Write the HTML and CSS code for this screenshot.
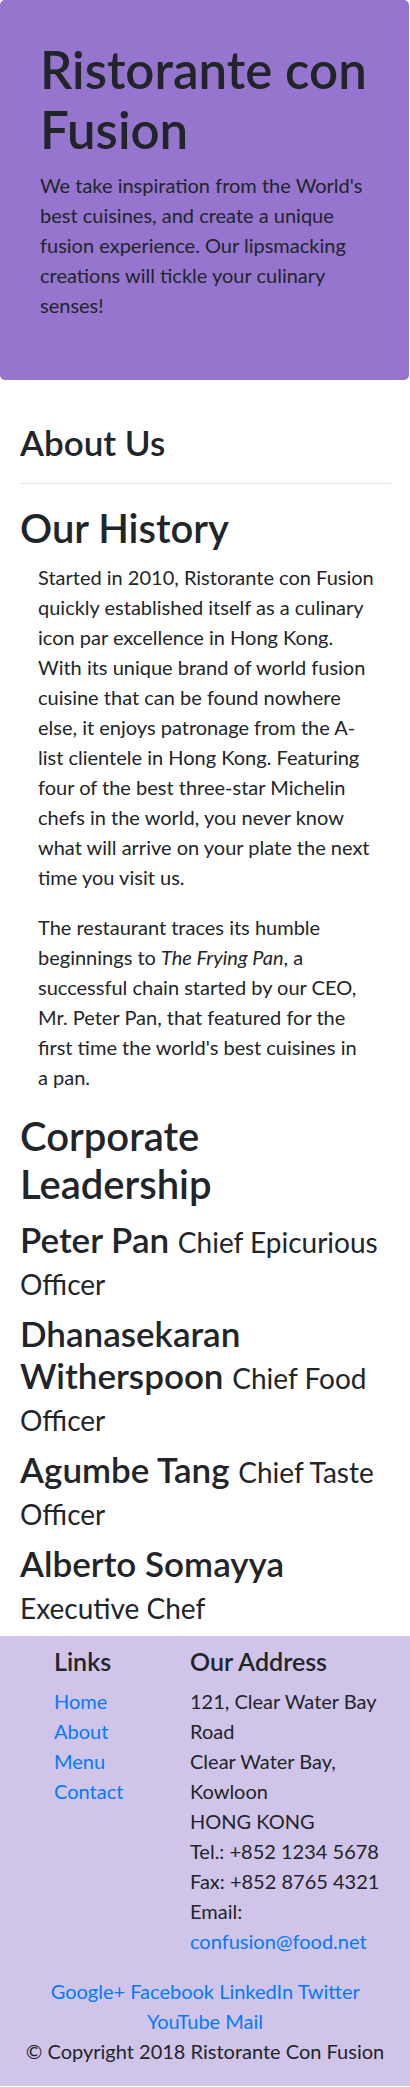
FILE: index.html
```html
<!DOCTYPE html>
<html lang="en">
<head>
<meta charset="utf-8">
<title>Ristorante con Fusion: About Us</title>
<link rel="stylesheet" href="styles.css">
</head>
<body>
<header class="jumbotron">
  <h1 class="brand-title">Ristorante con Fusion</h1>
  <p class="lead">We take inspiration from the World's best cuisines, and create a unique fusion experience. Our lipsmacking creations will tickle your culinary senses!</p>
</header>

<main class="content">
  <h3 class="page-title">About Us</h3>
  <hr class="divider">
  <h2 class="section-title">Our History</h2>
  <p class="history">Started in 2010, Ristorante con Fusion quickly established itself as a culinary icon par excellence in Hong Kong. With its unique brand of world fusion cuisine that can be found nowhere else, it enjoys patronage from the A-list clientele in Hong Kong. Featuring four of the best three-star Michelin chefs in the world, you never know what will arrive on your plate the next time you visit us.</p>
  <p class="history">The restaurant traces its humble beginnings to <em>The Frying Pan</em>, a successful chain started by our CEO, Mr. Peter Pan, that featured for the first time the world's best cuisines in a&nbsp;pan.</p>

  <h2 class="section-title">Corporate Leadership</h2>
  <h3 class="leader">Peter Pan <small>Chief Epicurious Officer</small></h3>
  <h3 class="leader">Dhanasekaran Witherspoon <small>Chief Food Officer</small></h3>
  <h3 class="leader">Agumbe Tang <small>Chief Taste Officer</small></h3>
  <h3 class="leader">Alberto Somayya <small>Executive Chef</small></h3>
</main>

<footer class="footer">
  <div class="footer-cols">
    <div class="footer-links">
      <h5 class="footer-title">Links</h5>
      <ul class="link-list">
        <li><a href="#">Home</a></li>
        <li><a href="#">About</a></li>
        <li><a href="#">Menu</a></li>
        <li><a href="#">Contact</a></li>
      </ul>
    </div>
    <div class="footer-address">
      <h5 class="footer-title">Our Address</h5>
      <address class="address">
        121, Clear Water Bay Road<br>
        Clear Water Bay, Kowloon<br>
        HONG KONG<br>
        Tel.: +852 1234 5678<br>
        Fax: +852 8765 4321<br>
        Email: <a href="#">confusion@food.net</a>
      </address>
    </div>
  </div>
  <div class="social">
    <a href="#">Google+</a> <a href="#">Facebook</a> <a href="#">LinkedIn</a> <a href="#">Twitter</a> <a href="#">YouTube</a> <a href="#">Mail</a>
  </div>
  <p class="copyright">© Copyright 2018 Ristorante Con Fusion</p>
</footer>
</body>
</html>
```
FILE: styles.css
```css
html, body {
  margin: 0;
  padding: 0;
}
body {
  font-family: "Lato", "Liberation Sans", sans-serif;
  font-size: 20px;
  line-height: 1.5;
  color: #212529;
  background: #fff;
}
a {
  color: #007bff;
  text-decoration: none;
}

/* Jumbotron */
.jumbotron {
  background: #9575cd;
  border-radius: 5px;
  margin-right: 1px;
  padding: 40px 30px 60px 40px;
}
.brand-title {
  margin: 0 0 10px;
  font-size: 51px;
  line-height: 60px;
  font-weight: 600;
}
.lead {
  margin: 0;
  font-size: 20px;
  line-height: 30px;
  font-weight: 400;
}

/* Content */
.content {
  padding: 0 19px 0 20px;
}
.page-title {
  margin: 41px 0 10px;
  font-size: 35px;
  line-height: 42px;
  font-weight: 600;
}
.divider {
  margin: 20px 0;
  border: 0;
  border-top: 1px solid rgba(0, 0, 0, 0.1);
}
.section-title {
  margin: 0 0 10px;
  font-size: 40px;
  line-height: 48px;
  font-weight: 600;
}
.history {
  margin: 0 15px 20px 18px;
}
.leader {
  margin: 0 0 10px;
  font-size: 35px;
  line-height: 1.2;
  font-weight: 600;
}
.leader small {
  font-size: 80%;
  font-weight: 400;
}

/* Footer */
.footer {
  background: #d1c4e9;
  padding: 10px 15px 20px;
}
.footer-cols {
  display: grid;
  grid-template-columns: 136px 1fr;
  padding-left: 39px;
  margin-bottom: 20px;
}
.footer-title {
  margin: 0 0 10px;
  font-size: 25px;
  line-height: 30px;
  font-weight: 600;
}
.link-list {
  list-style: none;
  margin: 0;
  padding: 0;
}
.address {
  font-style: normal;
  margin: 0;
}
.social {
  text-align: center;
}
.copyright {
  margin: 0;
  text-align: center;
}
```
